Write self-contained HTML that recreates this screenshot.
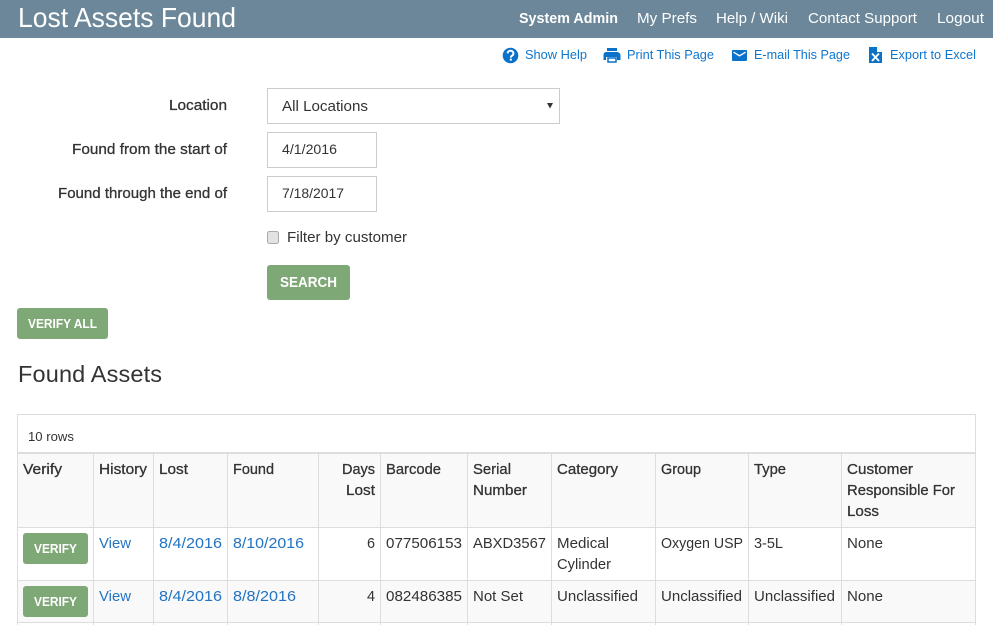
<!DOCTYPE html>
<html>
<head>
<meta charset="utf-8">
<title>Lost Assets Found</title>
<style>
html,body{margin:0;padding:0;background:#fff;width:993px;height:625px;overflow:hidden}
svg{display:block}
text{font-family:"Liberation Sans",sans-serif;font-size:15px;fill:#333;}
.w{fill:#fff}
.m{stroke:#333;stroke-width:.3px}
.tl{font-size:13px;fill:#0f76cc}
.l{fill:#2273c3}
.b{font-weight:bold;fill:#fff}
</style>
</head>
<body>
<svg width="993" height="625" viewBox="0 0 993 625" xmlns="http://www.w3.org/2000/svg">
<!-- header -->
<rect x="0" y="0" width="993" height="38" fill="#6b8799"/>
<text class="w" x="18" y="27" style="font-size:28px" textLength="218" lengthAdjust="spacingAndGlyphs">Lost Assets Found</text>
<text class="b" x="519" y="23" textLength="99" lengthAdjust="spacingAndGlyphs">System Admin</text>
<text class="w" x="637" y="23" textLength="60" lengthAdjust="spacingAndGlyphs">My Prefs</text>
<text class="w" x="716" y="23" textLength="72" lengthAdjust="spacingAndGlyphs">Help / Wiki</text>
<text class="w" x="808" y="23" textLength="109" lengthAdjust="spacingAndGlyphs">Contact Support</text>
<text class="w" x="937" y="23" textLength="47" lengthAdjust="spacingAndGlyphs">Logout</text>

<!-- toolbar -->
<circle cx="510.5" cy="55.5" r="7.8" fill="#0a72c8"/>
<path d="M507.6 53.4a2.9 2.7 0 1 1 4.6 2.2c-1 .7-1.4 1-1.4 2" fill="none" stroke="#fff" stroke-width="1.9"/>
<rect x="509.8" y="58.6" width="2" height="2" fill="#fff"/>
<text class="tl" x="525" y="59" textLength="62" lengthAdjust="spacingAndGlyphs">Show Help</text>

<path d="M607 48h10v3h-10zM606 52h11a3.500 3.500 0 0 1 3.500 3v5h-3.500v-3h-11v3h-2.500v-5a3 3 0 0 1 2.500-3z" fill="#0a72c8"/>
<path d="M608 58h8v4h-8z" fill="#fff" stroke="#0a72c8" stroke-width="1.500"/>
<text class="tl" x="627" y="59" textLength="87" lengthAdjust="spacingAndGlyphs">Print This Page</text>

<rect x="732" y="50" width="15" height="11" rx="1" fill="#0a72c8"/>
<path d="M733.500 52.200l6 3.600 6-3.600" fill="none" stroke="#fff" stroke-width="1.400"/>
<text class="tl" x="754" y="59" textLength="96" lengthAdjust="spacingAndGlyphs">E-mail This Page</text>

<path d="M869 47h8l5 5v11h-13z" fill="#0a72c8"/>
<path d="M877 47v5h5z" fill="#fff"/>
<path d="M872 53.500l7 7.500M879 53.500l-7 7.500" stroke="#fff" stroke-width="1.800" fill="none"/>
<text class="tl" x="890" y="59" textLength="86" lengthAdjust="spacingAndGlyphs">Export to Excel</text>

<!-- form -->
<text class="m" x="169" y="110" textLength="58" lengthAdjust="spacingAndGlyphs">Location</text>
<rect x="267.500" y="88.500" width="292" height="35" fill="#fff" stroke="#ccc"/>
<text x="282" y="111" textLength="86" lengthAdjust="spacingAndGlyphs">All Locations</text>
<path d="M547 103h6l-3 5.500z" fill="#333"/>

<text class="m" x="72" y="154" textLength="155" lengthAdjust="spacingAndGlyphs">Found from the start of</text>
<rect x="267.500" y="132.500" width="109" height="35" fill="#fff" stroke="#ccc"/>
<text x="282" y="154" style="font-size:14px" textLength="55" lengthAdjust="spacingAndGlyphs">4/1/2016</text>

<text class="m" x="58" y="198" textLength="169" lengthAdjust="spacingAndGlyphs">Found through the end of</text>
<rect x="267.500" y="176.500" width="109" height="35" fill="#fff" stroke="#ccc"/>
<text x="282" y="198" style="font-size:14px" textLength="62" lengthAdjust="spacingAndGlyphs">7/18/2017</text>

<rect x="267.500" y="231.500" width="11" height="12" rx="2" fill="#e3e3e3" stroke="#aaa"/>
<text x="287" y="242" textLength="120" lengthAdjust="spacingAndGlyphs">Filter by customer</text>

<rect x="267" y="265" width="83" height="35" rx="3" fill="#7fa877"/>
<text class="b" x="280" y="287" style="font-size:14.500px" textLength="57" lengthAdjust="spacingAndGlyphs">SEARCH</text>

<rect x="17" y="308" width="91" height="31" rx="3" fill="#7fa877"/>
<text class="b" x="28" y="328" style="font-size:12.500px" textLength="69" lengthAdjust="spacingAndGlyphs">VERIFY ALL</text>

<text x="18" y="382" style="font-size:23.5px" textLength="144" lengthAdjust="spacing">Found Assets</text>

<!-- table panel -->
<rect x="17.500" y="414.500" width="958" height="220" fill="#fff" stroke="#ddd"/>
<text x="28" y="441" style="font-size:12.500px" textLength="46" lengthAdjust="spacingAndGlyphs">10 rows</text>

<rect x="18" y="454" width="957" height="73" fill="#f9f9f9"/>
<rect x="18" y="581" width="957" height="41" fill="#f9f9f9"/>
<g fill="#ddd">
<rect x="17" y="452" width="959" height="2"/>
<rect x="17" y="527" width="959" height="1"/>
<rect x="17" y="580" width="959" height="1"/>
<rect x="17" y="622" width="959" height="1"/>
<rect x="93" y="454" width="1" height="171"/>
<rect x="153" y="454" width="1" height="171"/>
<rect x="227" y="454" width="1" height="171"/>
<rect x="318" y="454" width="1" height="171"/>
<rect x="380" y="454" width="1" height="171"/>
<rect x="467" y="454" width="1" height="171"/>
<rect x="551" y="454" width="1" height="171"/>
<rect x="655" y="454" width="1" height="171"/>
<rect x="748" y="454" width="1" height="171"/>
<rect x="841" y="454" width="1" height="171"/>
</g>

<!-- thead -->
<text class="m" x="23" y="474" textLength="39" lengthAdjust="spacingAndGlyphs">Verify</text>
<text class="m" x="99" y="474" textLength="48" lengthAdjust="spacingAndGlyphs">History</text>
<text class="m" x="159" y="474" textLength="29" lengthAdjust="spacingAndGlyphs">Lost</text>
<text class="m" x="233" y="474" textLength="41" lengthAdjust="spacingAndGlyphs">Found</text>
<text class="m" x="342" y="474" textLength="33" lengthAdjust="spacingAndGlyphs">Days</text>
<text class="m" x="346" y="495" textLength="29" lengthAdjust="spacingAndGlyphs">Lost</text>
<text class="m" x="386" y="474" textLength="55" lengthAdjust="spacingAndGlyphs">Barcode</text>
<text class="m" x="473" y="474" textLength="38" lengthAdjust="spacingAndGlyphs">Serial</text>
<text class="m" x="473" y="495" textLength="54" lengthAdjust="spacingAndGlyphs">Number</text>
<text class="m" x="557" y="474" textLength="61" lengthAdjust="spacingAndGlyphs">Category</text>
<text class="m" x="661" y="474" textLength="40" lengthAdjust="spacingAndGlyphs">Group</text>
<text class="m" x="754" y="474" textLength="32" lengthAdjust="spacingAndGlyphs">Type</text>
<text class="m" x="847" y="474" textLength="66" lengthAdjust="spacingAndGlyphs">Customer</text>
<text class="m" x="847" y="495" textLength="108" lengthAdjust="spacingAndGlyphs">Responsible For</text>
<text class="m" x="847" y="516" textLength="32" lengthAdjust="spacingAndGlyphs">Loss</text>

<!-- row 1 -->
<rect x="23" y="533" width="65" height="31" rx="3" fill="#7fa877"/>
<text class="b" x="34" y="553" style="font-size:12.500px" textLength="43" lengthAdjust="spacingAndGlyphs">VERIFY</text>
<text class="l" x="99" y="548" textLength="32" lengthAdjust="spacingAndGlyphs">View</text>
<text class="l" x="159" y="548" textLength="63" lengthAdjust="spacingAndGlyphs">8/4/2016</text>
<text class="l" x="233" y="548" textLength="71" lengthAdjust="spacingAndGlyphs">8/10/2016</text>
<text x="367" y="548" textLength="8" lengthAdjust="spacingAndGlyphs">6</text>
<text x="386" y="548" textLength="76" lengthAdjust="spacingAndGlyphs">077506153</text>
<text x="473" y="548" textLength="73" lengthAdjust="spacingAndGlyphs">ABXD3567</text>
<text x="557" y="548" textLength="52" lengthAdjust="spacingAndGlyphs">Medical</text>
<text x="557" y="569" textLength="54" lengthAdjust="spacingAndGlyphs">Cylinder</text>
<text x="661" y="548" textLength="82" lengthAdjust="spacingAndGlyphs">Oxygen USP</text>
<text x="754" y="548" textLength="29" lengthAdjust="spacingAndGlyphs">3-5L</text>
<text x="847" y="548" textLength="36" lengthAdjust="spacingAndGlyphs">None</text>

<!-- row 2 -->
<rect x="23" y="586" width="65" height="31" rx="3" fill="#7fa877"/>
<text class="b" x="34" y="606" style="font-size:12.500px" textLength="43" lengthAdjust="spacingAndGlyphs">VERIFY</text>
<text class="l" x="99" y="601" textLength="32" lengthAdjust="spacingAndGlyphs">View</text>
<text class="l" x="159" y="601" textLength="63" lengthAdjust="spacingAndGlyphs">8/4/2016</text>
<text class="l" x="233" y="601" textLength="63" lengthAdjust="spacingAndGlyphs">8/8/2016</text>
<text x="367" y="601" textLength="8" lengthAdjust="spacingAndGlyphs">4</text>
<text x="386" y="601" textLength="76" lengthAdjust="spacingAndGlyphs">082486385</text>
<text x="473" y="601" textLength="50" lengthAdjust="spacingAndGlyphs">Not Set</text>
<text x="557" y="601" textLength="81" lengthAdjust="spacingAndGlyphs">Unclassified</text>
<text x="661" y="601" textLength="81" lengthAdjust="spacingAndGlyphs">Unclassified</text>
<text x="754" y="601" textLength="81" lengthAdjust="spacingAndGlyphs">Unclassified</text>
<text x="847" y="601" textLength="36" lengthAdjust="spacingAndGlyphs">None</text>
</svg>
</body>
</html>
